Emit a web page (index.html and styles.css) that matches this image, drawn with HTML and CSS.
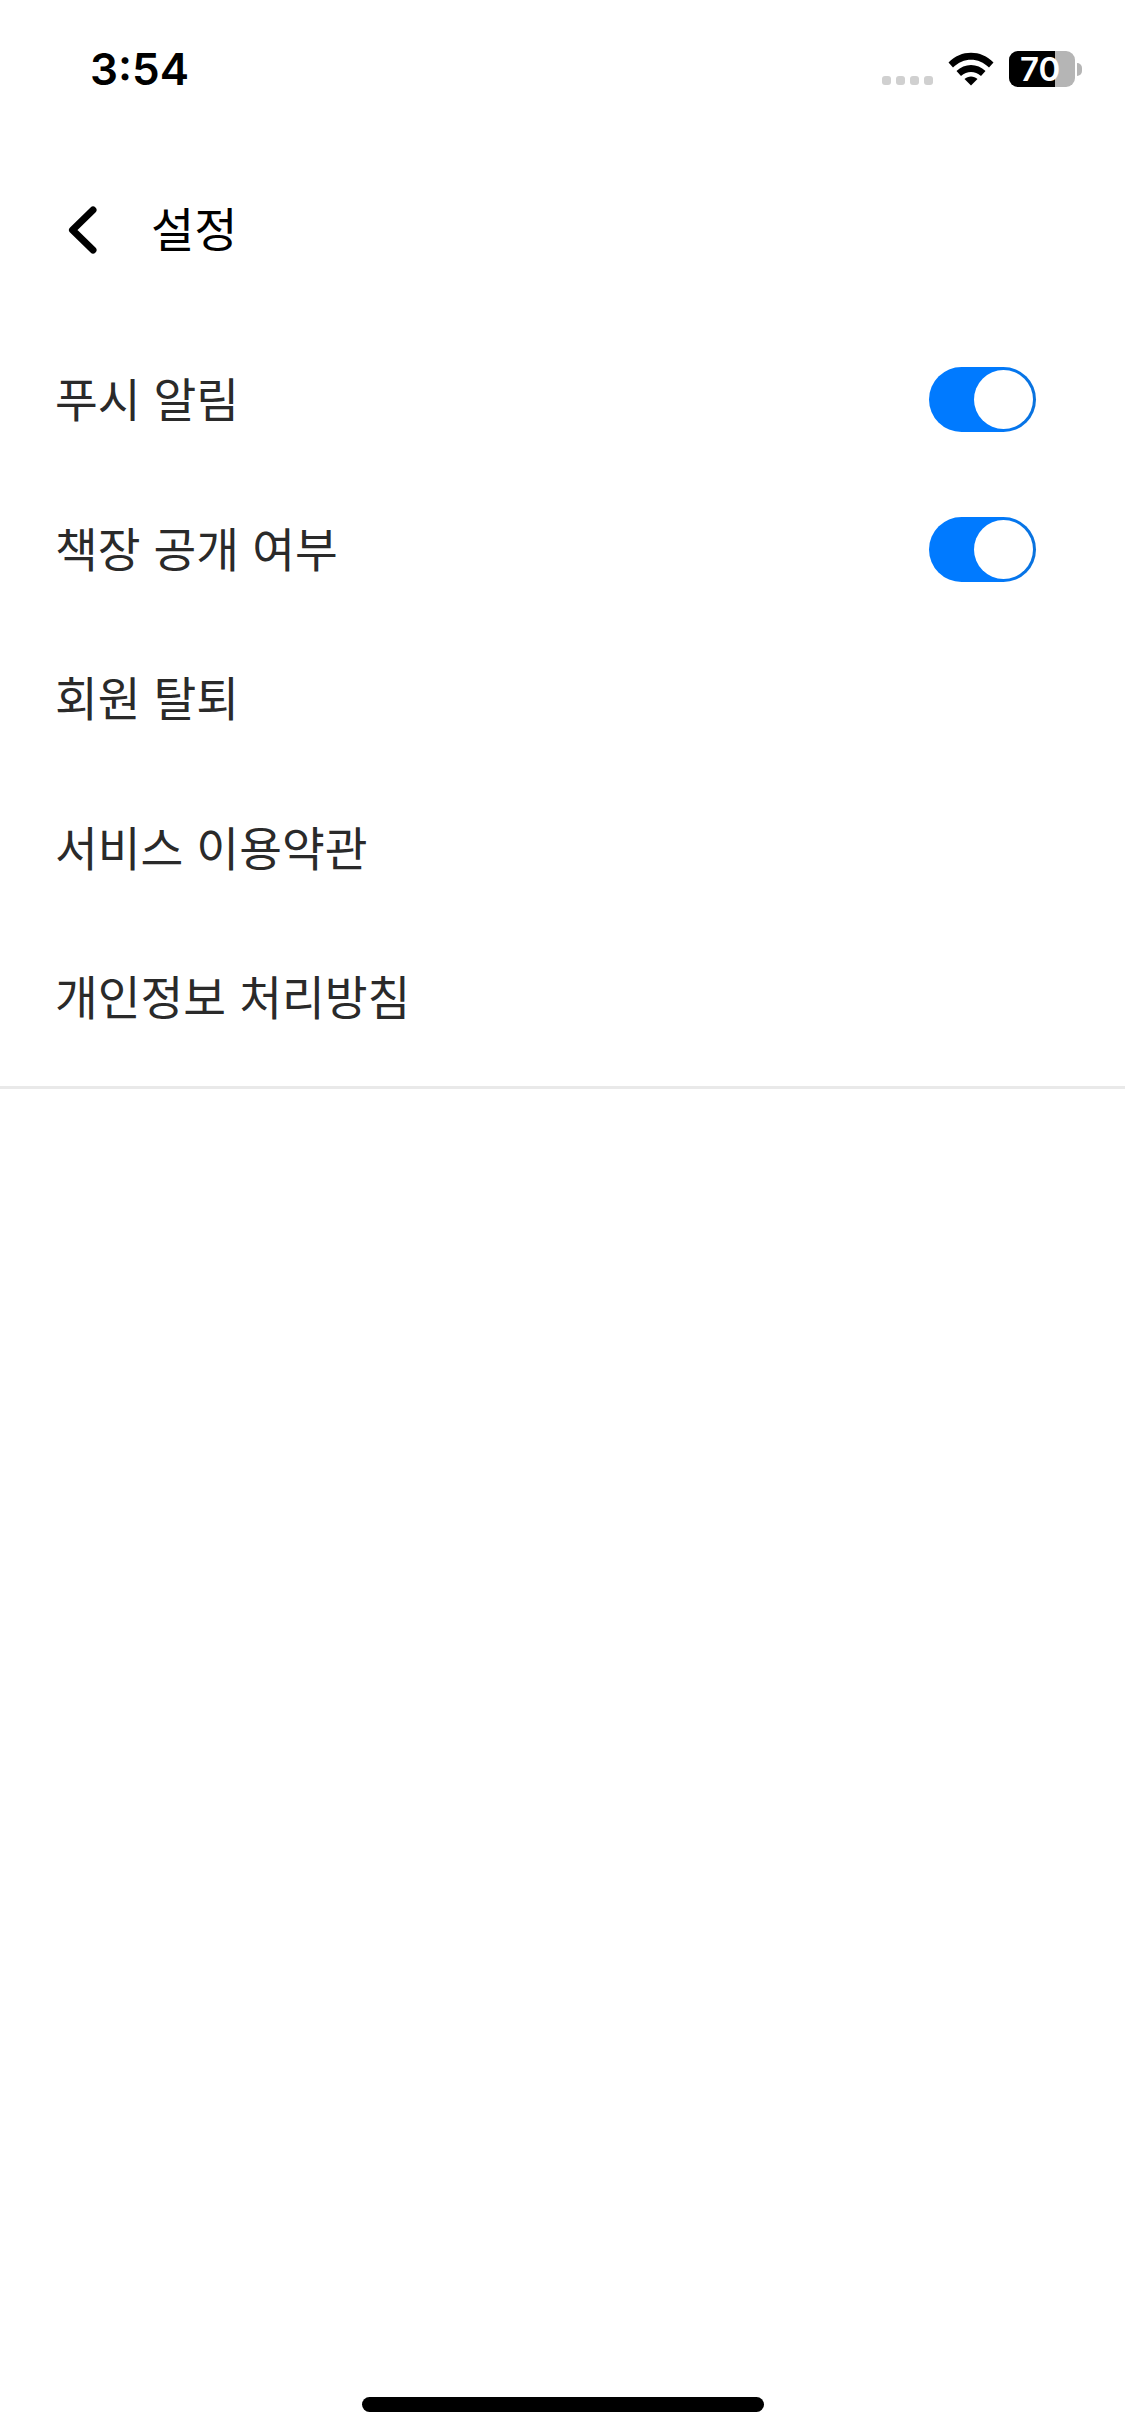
FILE: index.html
```html
<!DOCTYPE html>
<html lang="ko">

<head>
  <meta charset="UTF-8">
  <meta name="viewport" content="width=device-width, initial-scale=1.0">
  <title>설정</title>
  <link rel="stylesheet" href="styles.css">
</head>

<body>
  <div class="status-bar">
    <span class="time">3:54</span>
    <div class="status-icons">
      <div class="signal">
        <span></span><span></span><span></span><span></span>
      </div>
      <svg class="wifi" width="46" height="34" viewBox="0 0 46 34">
        <path d="M0.500 10.500 C13 -2.500 33 -2.500 45.500 10.500 L41 15.500 C30.500 5 15.500 5 5 15.500 Z" fill="#000" />
        <path d="M8.500 19 C16.500 11 29.500 11 37.500 19 L33 24 C27 18.500 19 18.500 13 24 Z" fill="#000" />
        <path d="M16.500 27 C20 23.500 26 23.500 29.500 27 L23 33.500 Z" fill="#000" />
      </svg>
      <div class="battery">
        <div class="battery-body">
          <div class="battery-level"></div>
          <span class="battery-text">70</span>
        </div>
        <div class="battery-cap"></div>
      </div>
    </div>
  </div>

  <div class="header">
    <svg class="back" width="34" height="50" viewBox="0 0 34 50">
      <path d="M27 5 L6.500 25 L27 45" fill="none" stroke="#000" stroke-width="7" stroke-linecap="round" stroke-linejoin="round" />
    </svg>
    <h1>설정</h1>
  </div>

  <div class="settings">
    <div class="row">
      <span>푸시 알림</span>
      <div class="toggle"><div class="knob"></div></div>
    </div>
    <div class="row">
      <span>책장 공개 여부</span>
      <div class="toggle"><div class="knob"></div></div>
    </div>
    <div class="row"><span>회원 탈퇴</span></div>
    <div class="row"><span>서비스 이용약관</span></div>
    <div class="row"><span>개인정보 처리방침</span></div>
  </div>

  <div class="spacer"></div>
  <div class="home-bar"></div>
</body>

</html>
```

FILE: styles.css
```css
html,
body {
  margin: 0;
  height: 100%;
}

body {
  width: 1125px;
  height: 2436px;
  display: flex;
  flex-direction: column;
  overflow: hidden;
  background-color: #fff;
  color: #2a2a2a;
  font-family: "Noto Sans CJK KR", "Noto Sans", sans-serif;
}

.status-bar {
  height: 138px;
  padding: 0 43px 0 90px;
  display: flex;
  justify-content: space-between;
  align-items: flex-start;
  box-sizing: border-box;
}

.time {
  margin-top: 40px;
  font-family: Inter, sans-serif;
  font-size: 44px;
  line-height: 58px;
  font-weight: 600;
  color: #000;
}

.status-icons {
  margin-top: 51px;
  display: flex;
  align-items: flex-start;
}

.signal {
  margin-top: 25px;
  margin-right: 15px;
  display: flex;
  gap: 5px;
}

.signal span {
  width: 9px;
  height: 9px;
  border-radius: 3px;
  background-color: #d0d0d0;
}

.wifi {
  margin-top: 1px;
  margin-right: 15px;
}

.battery {
  display: flex;
  align-items: center;
}

.battery-body {
  position: relative;
  width: 66px;
  height: 36px;
  border-radius: 9px;
  background-color: #b5b5b5;
}

.battery-level {
  width: 46px;
  height: 36px;
  border-radius: 9px 0 0 9px;
  background-color: #000;
}

.battery-text {
  position: absolute;
  left: 11px;
  top: 0;
  font-family: Inter, sans-serif;
  font-size: 33px;
  line-height: 36px;
  font-weight: 600;
  color: #fff;
}

.battery-cap {
  width: 5px;
  height: 13px;
  margin-left: 2px;
  border-radius: 0 7px 7px 0;
  background-color: #b5b5b5;
}

.header {
  height: 184px;
  padding-left: 66px;
  display: flex;
  align-items: center;
  gap: 51px;
}

.back {
  flex-shrink: 0;
}

.header h1 {
  margin: 0 0 8px;
  font-size: 47px;
  font-weight: 400;
  color: #000;
}

.settings {
  height: 764px;
  padding: 0 89px 0 55px;
  border-bottom: 3px solid #e9e9e9;
  display: flex;
  flex-direction: column;
}

.row {
  height: 149.500px;
  display: flex;
  justify-content: space-between;
  align-items: center;
  font-size: 46.500px;
}

.toggle {
  width: 107px;
  height: 65px;
  margin-top: 6px;
  padding: 3px;
  box-sizing: border-box;
  display: flex;
  justify-content: flex-end;
  border-radius: 33px;
  background: linear-gradient(90deg, #007aff 60%, #0a72dc);
}

.knob {
  width: 59px;
  height: 59px;
  border-radius: 50%;
  background-color: #fff;
}

.spacer {
  flex: 1;
}

.home-bar {
  width: 402px;
  height: 15px;
  margin: 0 auto 24px;
  border-radius: 8px;
  background-color: #000;
}
```
